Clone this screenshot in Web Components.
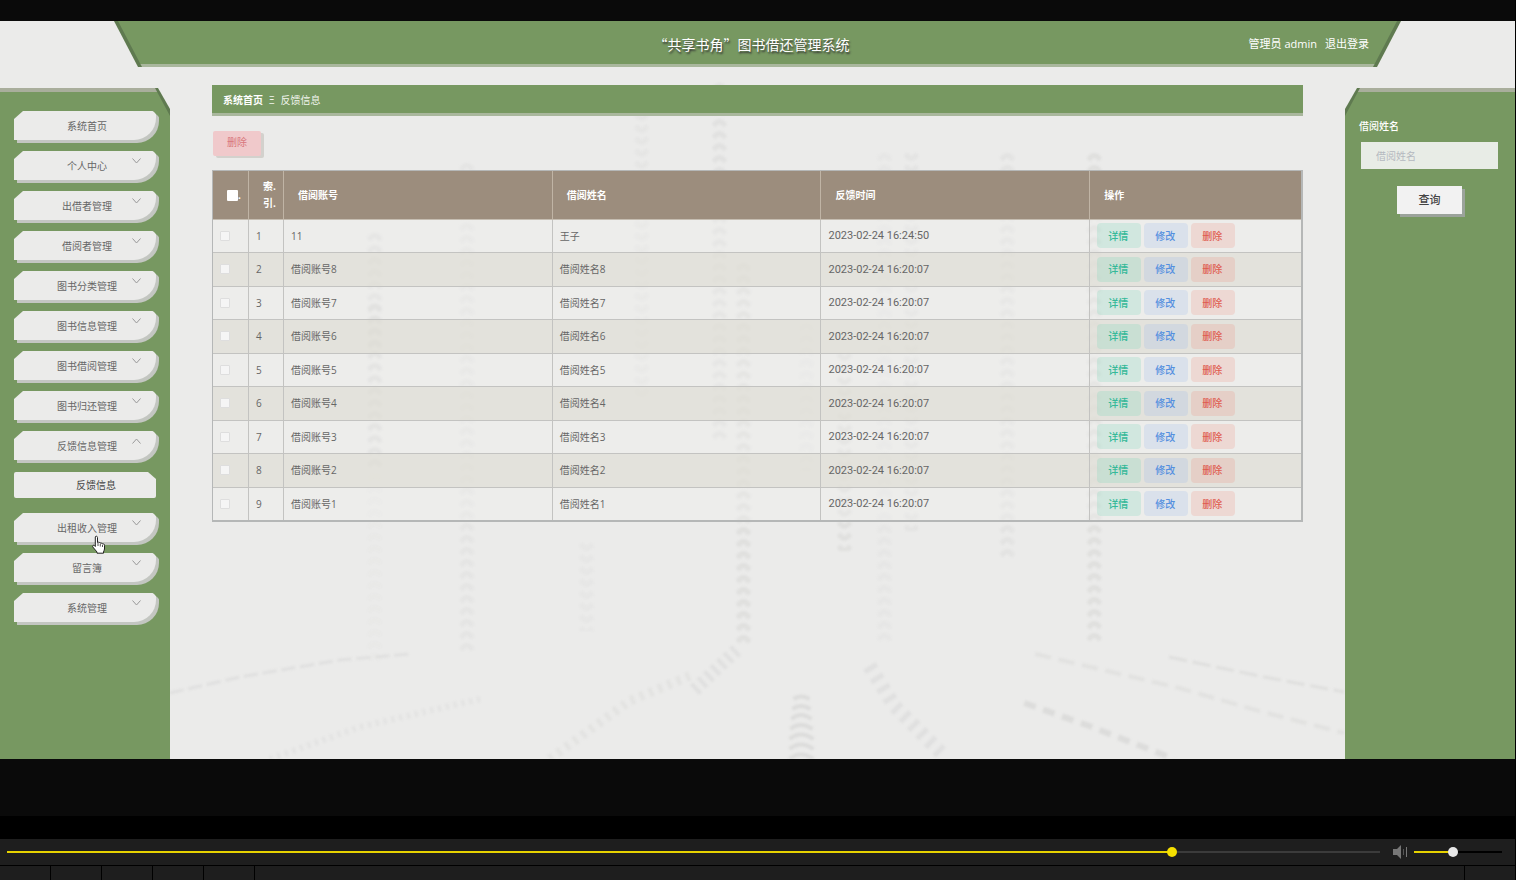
<!DOCTYPE html>
<html lang="zh-CN">
<head>
<meta charset="utf-8">
<title>“共享书角”图书借还管理系统</title>
<style>
  html { height: 100%; }
  body {
    margin: 0;
    min-height: 100%;
    display: flex;
    background: #000;
    color: #666;
    font: 10px/16px "Open Sans", "Noto Sans CJK SC", sans-serif;
    --green: #779861;
    --edge: #5f7a50;
    --light: #a9b79d;
    --paper: #ebebea;
  }
</style>
</head>
<body>
<video-stage></video-stage>
<script>
const define = (name, html, setup) => customElements.define(name, class extends HTMLElement {
  constructor() {
    super();
    const template = document.createElement('template');
    template.innerHTML = '<style>*{box-sizing:border-box}</style>' + html;
    this.attachShadow({ mode: 'open' }).append(template.content.cloneNode(true));
  }
  connectedCallback() {
    if (setup && !this.ready) { this.ready = true; setup(this, this.shadowRoot); }
  }
});

define('tread-backdrop', `
<style>
  :host { display: block; position: absolute; inset: 0; overflow: hidden; }
  svg { display: block; width: 100%; height: 100%; filter: blur(1px); }
</style>
<svg viewBox="0 0 1516 738" preserveAspectRatio="none" aria-hidden="true" fill="none">
  <defs>
    <pattern id="up" width="14" height="12" patternUnits="userSpaceOnUse">
      <path d="M1 9 Q7 0 13 9" stroke="#cfcfce" stroke-width="5"/>
    </pattern>
    <pattern id="down" width="14" height="12" patternUnits="userSpaceOnUse">
      <path d="M1 3 Q7 12 13 3" stroke="#cfcfce" stroke-width="5"/>
    </pattern>
  </defs>
  <g id="strips"></g>
  <g stroke="#dcdcdb">
    <path d="M170 672 L240 656 L340 639 L410 633" stroke-width="3" stroke-dasharray="14 5" opacity=".7"/>
    <path d="M270 738 L360 706 L485 677" stroke-width="6" stroke-dasharray="3 5" opacity=".5"/>
    <path d="M550 738 L630 680 L690 655" stroke-width="9" stroke-dasharray="4 6" opacity=".55"/>
    <path d="M695 669 L738 628" stroke-width="13" stroke-dasharray="4 5" opacity=".7"/>
    <path d="M870 645 L895 685 L945 735" stroke-width="14" stroke-dasharray="5 7" opacity=".7"/>
    <path d="M1025 682 L1090 705 L1175 738" stroke-width="6" stroke-dasharray="12 8"/>
    <path d="M1036 633 L1180 667 L1260 690 L1345 712" stroke-width="4" stroke-dasharray="16 8" opacity=".6"/>
    <path d="M1170 636 L1260 655 L1345 671" stroke-width="3" stroke-dasharray="18 6" opacity=".8"/>
    <path d="M790 738q11-9 24 0M790 728q11-9 24 0M790 718q11-9 24 0M791 708q10-8 22 0M792 698q9-8 20 0M793 688q8-6 18 0M794 678q8-5 16 0" stroke-width="4"/>
  </g>
</svg>`, (host, root) => {
  // x, top, height, pattern, opacity
  const strips = [
    [368, 210, 120, 'up', .35], [368, 280, 170, 'up', .45], [368, 450, 190, 'up', .08],
    [460, 140, 490, 'up', .2], [580, 520, 90, 'down', .15], [635, 90, 290, 'down', .18],
    [713, 60, 360, 'up', .32], [737, 240, 385, 'up', .4], [838, 330, 200, 'down', .38],
    [878, 130, 490, 'up', .14], [905, 130, 380, 'down', .26], [1001, 130, 410, 'up', .28],
    [1088, 130, 490, 'up', .4], [800, 300, 150, 'up', .12]
  ];
  root.getElementById('strips').innerHTML = strips.map(([x, y, h, p, o]) =>
    `<g transform="translate(${x} ${y})" opacity="${o}"><rect width="14" height="${h}" fill="url(#${p})"/></g>`).join('');
});

define('app-header', `
<style>
  :host {
    display: grid; grid-template-columns: 1fr auto 1fr; align-items: center;
    position: relative; height: 46px; margin: 0 114px; padding: 0 32px 0 20px;
    background: var(--edge); color: #fff;
    clip-path: polygon(0 0, 100% 0, calc(100% - 24px) 100%, 24px 100%);
  }
  :host::before {
    content: ""; position: absolute; inset: 0;
    background: linear-gradient(to top, var(--light) 3px, var(--green) 3px);
    clip-path: polygon(4px 0, calc(100% - 4px) 0, calc(100% - 28px) 100%, 28px 100%);
  }
  h1 { grid-column: 2; position: relative; margin: 0; font: 400 14px/20px "Noto Sans CJK SC", sans-serif; text-shadow: 1px 2px 2px #333; }
  div { position: relative; display: flex; justify-content: flex-end; gap: 8px; font-size: 11px; }
  a { color: inherit; text-decoration: none; }
</style>
<h1>“共享书角”图书借还管理系统</h1>
<div><span>管理员 admin</span><a href="#logout">退出登录</a></div>`);

define('side-item', `
<style>
  :host { display: block; position: relative; }
  button {
    display: grid; width: 100%; height: 29px; padding: 0; border: 0;
    background: var(--paper); color: #666; font: inherit; cursor: pointer;
    border-radius: 0 4px 22px 0; box-shadow: 3px 3px 0 #c3c6c1;
    clip-path: polygon(9px 0, calc(100% - 3px) 0, calc(100% + 3px) 6px, calc(100% + 3px) calc(100% + 3px), 2px calc(100% + 3px), 0 100%, 0 8px);
  }
  span, svg { grid-area: 1 / 1; }
  span { place-self: center; padding-left: 4px; }
  svg { place-self: start end; width: 9px; height: 6px; margin: 7px 15px; fill: none; stroke: #999; }
  :host([open]) svg { transform: rotate(180deg); }
  :host([leaf]) svg { display: none; }
  :host([sub]) button { height: 26px; border-radius: 2px; box-shadow: none; color: #444; clip-path: polygon(0 0, calc(100% - 8px) 0, 100% 7px, 100% 100%, 0 100%); }
  :host([sub]) span { padding-left: 22px; }
</style>
<button type="button"><span><slot></slot></span><svg viewBox="0 0 9 6"><path d="M.5 .5 4.500 5 8.500 .5"/></svg></button>`);

define('side-menu', `
<style>
  :host { display: block; position: relative; background: var(--edge); clip-path: polygon(0 0, calc(100% - 12px) 0, 100% 21px, 100% 100%, 0 100%); }
  :host::before {
    content: ""; position: absolute; inset: 0;
    background: linear-gradient(#a9ae9c 4px, var(--green) 4px);
    clip-path: polygon(0 0, calc(100% - 15px) 0, 100% 28px, 100% 100%, 0 100%);
  }
  nav { position: relative; display: flex; flex-direction: column; gap: 11px; padding: 23px 14px; }
  side-item[sub] { padding: 1px 0 4px; }
  .pointer { position: absolute; left: 91px; top: 447px; width: 15px; height: 19px; }
</style>
<nav aria-label="主菜单">
  <side-item leaf>系统首页</side-item>
  <side-item>个人中心</side-item>
  <side-item>出借者管理</side-item>
  <side-item>借阅者管理</side-item>
  <side-item>图书分类管理</side-item>
  <side-item>图书信息管理</side-item>
  <side-item>图书借阅管理</side-item>
  <side-item>图书归还管理</side-item>
  <side-item open>反馈信息管理</side-item>
  <side-item leaf sub>反馈信息</side-item>
  <side-item>出租收入管理</side-item>
  <side-item>留言簿</side-item>
  <side-item>系统管理</side-item>
  <svg class="pointer" viewBox="0 0 15 19" aria-hidden="true"><path d="M4.500 1.500c1-.8 2 0 2 1v5l1-.3c.8 0 1.400.3 1.500 1 .9-.5 1.900-.1 2.200.7 1.200-.4 2.300.2 2.300 1.500v3.600c0 1-.8 2-1 3v1.200H6v-1.200L1.800 12c-.7-1.200.5-2.200 1.500-1.500l1 1V2z" fill="#fff" stroke="#222"/><path d="M7 8v3M9.300 9v2.500M11.500 10v2" stroke="#555"/></svg>
</nav>`);

define('search-panel', `
<style>
  :host { display: block; position: relative; background: var(--edge); clip-path: polygon(12px 0, 100% 0, 100% 100%, 0 100%, 0 21px); }
  :host::before {
    content: ""; position: absolute; inset: 0;
    background: linear-gradient(#a9ae9c 4px, var(--green) 4px);
    clip-path: polygon(15px 0, 100% 0, 100% 100%, 0 100%, 0 28px);
  }
  form { position: relative; display: flex; flex-direction: column; padding: 30px 17px 0 16px; }
  label { margin-left: -2px; color: #fff; font-weight: 500; }
  input { width: 100%; height: 27px; margin: 8px 0 17px; padding: 0 15px; border: 0; background: #e8ece6; font: inherit; color: #555; }
  input::placeholder { color: #b5b9c0; opacity: 1; }
  button { align-self: center; width: 65px; height: 28px; padding: 0; border: 0; background: #f2f2f2; box-shadow: 3px 3px 0 #9ba39b; color: #444; font: 500 11px/16px "Open Sans", "Noto Sans CJK SC", sans-serif; }
</style>
<form>
  <label for="name">借阅姓名</label>
  <input id="name" type="text" placeholder="借阅姓名">
  <button type="button">查询</button>
</form>`);

define('bread-crumb', `
<style>
  :host { display: block; height: 31px; padding: 7px 11px; background: var(--green); border-bottom: 3px solid var(--light); color: #f2f5ee; }
  nav { display: flex; gap: 6px; }
  a { color: #fff; font-weight: 700; text-decoration: none; }
</style>
<nav aria-label="位置"><a href="#home">系统首页</a><span>Ξ</span><span>反馈信息</span></nav>`);

define('feedback-table', `
<style>
  :host { display: block; }
  table { width: 100%; table-layout: fixed; border-collapse: separate; border-spacing: 0; border: solid #b5b7b7; border-width: 1px 2px 2px 1px; }
  .c { width: 36px; } .n { width: 35px; } .d { width: 24.7%; }
  th { height: 49px; padding: 0 14px; background: #9c8d7d; color: #fff; text-align: left; line-height: 17px; border-right: 1px solid #c0b4a5; border-bottom: 1px solid #c5bdb1; }
  th:last-child, td:last-child { border-right: 0; }
  td { height: 33px; padding: 0 7px 1px; border-right: 1px solid #c3c3c1; border-bottom: 1px solid #c3c3c1; background: rgba(240,240,239,.35); }
  tr:nth-child(even) td { height: 34px; background: rgba(224,223,215,.75); }
  tr:last-child td { height: 32px; border-bottom: 0; }
  th .pick { display: flex; align-items: center; }
  input { appearance: none; display: block; flex: none; width: 10px; height: 10px; margin: 0; background: #f5f5f5; border: 1px solid #dedede; border-radius: 1px; }
  th input { width: 11px; height: 11px; background: #fff; border: 0; }
  time { font: 11px/16px Roboto, sans-serif; }
  .ops { display: flex; gap: 3px; }
  .ops button { width: 44px; height: 25px; padding: 0 2px 0 0; border: 0; border-radius: 4px; font: inherit; font-weight: 500; }
  .view { background: rgba(120,215,185,.24); color: #35b999; }
  .edit { background: rgba(145,180,235,.2); color: #5590df; }
  .del { background: rgba(240,120,105,.18); color: #df5c50; }
</style>
<table>
  <colgroup><col class="c"><col class="n"><col class="d"><col class="d"><col class="d"><col></colgroup>
  <thead><tr><th><span class="pick"><input type="checkbox" aria-label="全选">.</span></th><th>索.<br>引.</th><th>借阅账号</th><th>借阅姓名</th><th>反馈时间</th><th>操作</th></tr></thead>
  <tbody></tbody>
</table>`, (host, root) => {
  const rows = [['11', '王子', '2023-02-24 16:24:50']];
  for (let i = 8; i > 0; i--) rows.push(['借阅账号' + i, '借阅姓名' + i, '2023-02-24 16:20:07']);
  root.querySelector('tbody').innerHTML = rows.map(([account, name, time], i) => `<tr>
    <td><input type="checkbox" aria-label="选择 ${i + 1}"></td><td>${i + 1}</td><td>${account}</td><td>${name}</td><td><time>${time}</time></td>
    <td><div class="ops"><button type="button" class="view">详情</button><button type="button" class="edit">修改</button><button type="button" class="del">删除</button></div></td></tr>`).join('');
});

define('admin-screen', `
<style>
  :host { display: flex; flex-direction: column; flex: 1; position: relative; background: var(--paper); }
  app-header { flex: none; }
  .cols { flex: 1; position: relative; display: grid; grid-template-columns: 170px minmax(0, 1fr) 170px; }
  side-menu, search-panel { margin-top: 21px; }
  main { padding: 18px 42px 0; }
  .remove { display: block; width: 48px; height: 25px; margin: 15px 0 14px 1px; padding: 0 0 4px; border: 0; border-radius: 2px; background: #f0c9cb; box-shadow: 3px 2px 0 #d3d1cd; color: #d8777c; font: inherit; }
</style>
<tread-backdrop></tread-backdrop>
<app-header></app-header>
<div class="cols">
  <side-menu></side-menu>
  <main>
    <bread-crumb></bread-crumb>
    <button class="remove" type="button">删除</button>
    <feedback-table></feedback-table>
  </main>
  <search-panel></search-panel>
</div>`);

define('player-bar', `
<style>
  :host { display: block; background: #1e1e1e; }
  .controls { display: flex; align-items: center; height: 26px; padding: 0 13px 0 7px; }
  input { appearance: none; display: block; height: 12px; margin: 0; background: linear-gradient(to right, #e6d200 var(--v), var(--rest) var(--v)) center / 100% 2px no-repeat; }
  input::-webkit-slider-thumb { appearance: none; width: 10px; height: 10px; border-radius: 50%; background: var(--knob); }
  .seek { flex: 1; --v: 85%; --rest: #3b3b3b; --knob: #f5df00; }
  .volume { width: 88px; --v: 44%; --rest: #000; --knob: #e8e8e8; }
  svg { width: 16px; height: 14px; margin: 0 6px 0 12px; }
  .tabs { display: flex; height: 15px; border-top: 1px solid #000; }
  .tabs i { width: 51px; border-right: 1px solid #000; }
  .tabs i:last-child { margin-left: auto; border-right: 0; border-left: 1px solid #000; }
</style>
<div class="controls">
  <input class="seek" type="range" min="0" max="1000" value="851" aria-label="播放进度">
  <svg viewBox="0 0 16 14" aria-hidden="true"><path d="M1 4h4l4-4v14l-4-4H1z" fill="#777"/><path d="M11.500 4v6" stroke="#555"/><path d="M14.500 2v10" stroke="#777"/></svg>
  <input class="volume" type="range" min="0" max="1000" value="436" aria-label="音量">
</div>
<div class="tabs"><i></i><i></i><i></i><i></i><i></i><i></i></div>`);

define('video-stage', `
<style>
  :host { display: flex; flex-direction: column; flex: 1; min-width: 0; padding-right: 1px; }
  .frame { flex: 1; display: flex; flex-direction: column; padding: 21px 0 57px; margin-bottom: 23px; background: #0a0a0a; }
</style>
<div class="frame"><admin-screen></admin-screen></div>
<player-bar></player-bar>`);
</script>
</body>
</html>
